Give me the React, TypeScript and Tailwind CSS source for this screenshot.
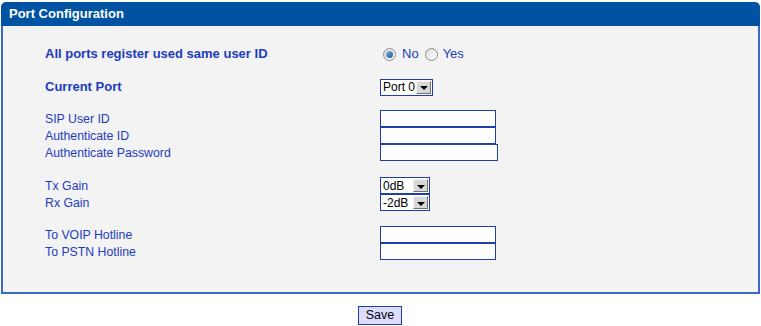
import React from "react";

const blue = "text-[#1c3cbc]";

function TextBox({ wide }: { wide?: boolean }) {
  return (
    <div
      className={`h-[17px] ${wide ? "w-[118px]" : "w-[116px]"} border border-[#1f3fa8] bg-white`}
    />
  );
}

function Select({ value, width }: { value: string; width: string }) {
  return (
    <div className={`flex h-[17px] ${width} items-center border border-[#1f3fa8] bg-white`}>
      <span className="min-w-0 flex-1 overflow-hidden whitespace-nowrap pl-[2px] text-[12px] leading-none text-black">
        {value}
      </span>
      <span className="mr-[1px] flex h-[13px] w-[15px] shrink-0 items-center justify-center border border-t-[#f0f0f0] border-l-[#f0f0f0] border-r-[#707070] border-b-[#707070] bg-[#d8d8d8]">
        <span className="mt-[2px] h-0 w-0 border-x-[4px] border-t-[4px] border-x-transparent border-t-black" />
      </span>
    </div>
  );
}

function Radio({ checked }: { checked?: boolean }) {
  return (
    <span className="flex h-[13px] w-[13px] items-center justify-center rounded-full border border-[#8a8a8a] bg-gradient-to-br from-[#dcdcdc] to-[#ffffff]">
      {checked && (
        <span className="h-[7px] w-[7px] rounded-full bg-gradient-to-br from-[#7fc0ea] to-[#14508a]" />
      )}
    </span>
  );
}

function Label({ children }: { children: React.ReactNode }) {
  return <div className="flex h-[17px] items-center pt-[1px]">{children}</div>;
}

export default function App() {
  return (
    <div className="h-[326px] w-[761px] bg-white pt-[2px] font-['Liberation_Sans',Arial,sans-serif]">
      <div className="ml-[1px] w-[759px]">
        <div className="flex h-[24px] items-center rounded-t-[5px] bg-[#0052a2] pl-[8px] text-[13px] font-bold text-white">
          Port Configuration
        </div>
        <div className="h-[268px] border-x-2 border-b-2 border-[#3a68c8] bg-[#f3f3f3] pl-[42px] pt-[18px]">
          <div className={`flex h-[20px] items-center ${blue}`}>
            <div className="w-[335px] text-[13px] font-bold">All ports register used same user ID</div>
            <div className="flex items-center pl-[3px] text-[13px]">
              <Radio checked />
              <span className="ml-[6px]">No</span>
              <span className="ml-[6px]">
                <Radio />
              </span>
              <span className="ml-[5px]">Yes</span>
            </div>
          </div>

          <div className={`mt-[14px] flex h-[18px] items-center ${blue}`}>
            <div className="w-[335px] text-[13px] font-bold">Current Port</div>
            <Select value="Port 0" width="w-[53px]" />
          </div>

          <div className={`mt-[14px] flex ${blue} text-[12.3px]`}>
            <div className="w-[335px]">
              <Label>SIP User ID</Label>
              <Label>Authenticate ID</Label>
              <Label>Authenticate Password</Label>
            </div>
            <div>
              <TextBox />
              <TextBox />
              <TextBox wide />
            </div>
          </div>

          <div className={`mt-[16px] flex ${blue} text-[12.3px]`}>
            <div className="w-[335px]">
              <Label>Tx Gain</Label>
              <Label>Rx Gain</Label>
            </div>
            <div>
              <Select value="0dB" width="w-[50px]" />
              <Select value="-2dB" width="w-[50px]" />
            </div>
          </div>

          <div className={`mt-[15px] flex ${blue} text-[12.3px]`}>
            <div className="w-[335px]">
              <Label>To VOIP Hotline</Label>
              <Label>To PSTN Hotline</Label>
            </div>
            <div>
              <TextBox />
              <TextBox />
            </div>
          </div>
        </div>
      </div>
      <div className="mt-[12px] flex justify-center">
        <button className="ml-[-1px] h-[19px] w-[44px] border border-[#2040a0] bg-[#dcdcff] text-[12.5px] leading-none text-black">
          Save
        </button>
      </div>
    </div>
  );
}
